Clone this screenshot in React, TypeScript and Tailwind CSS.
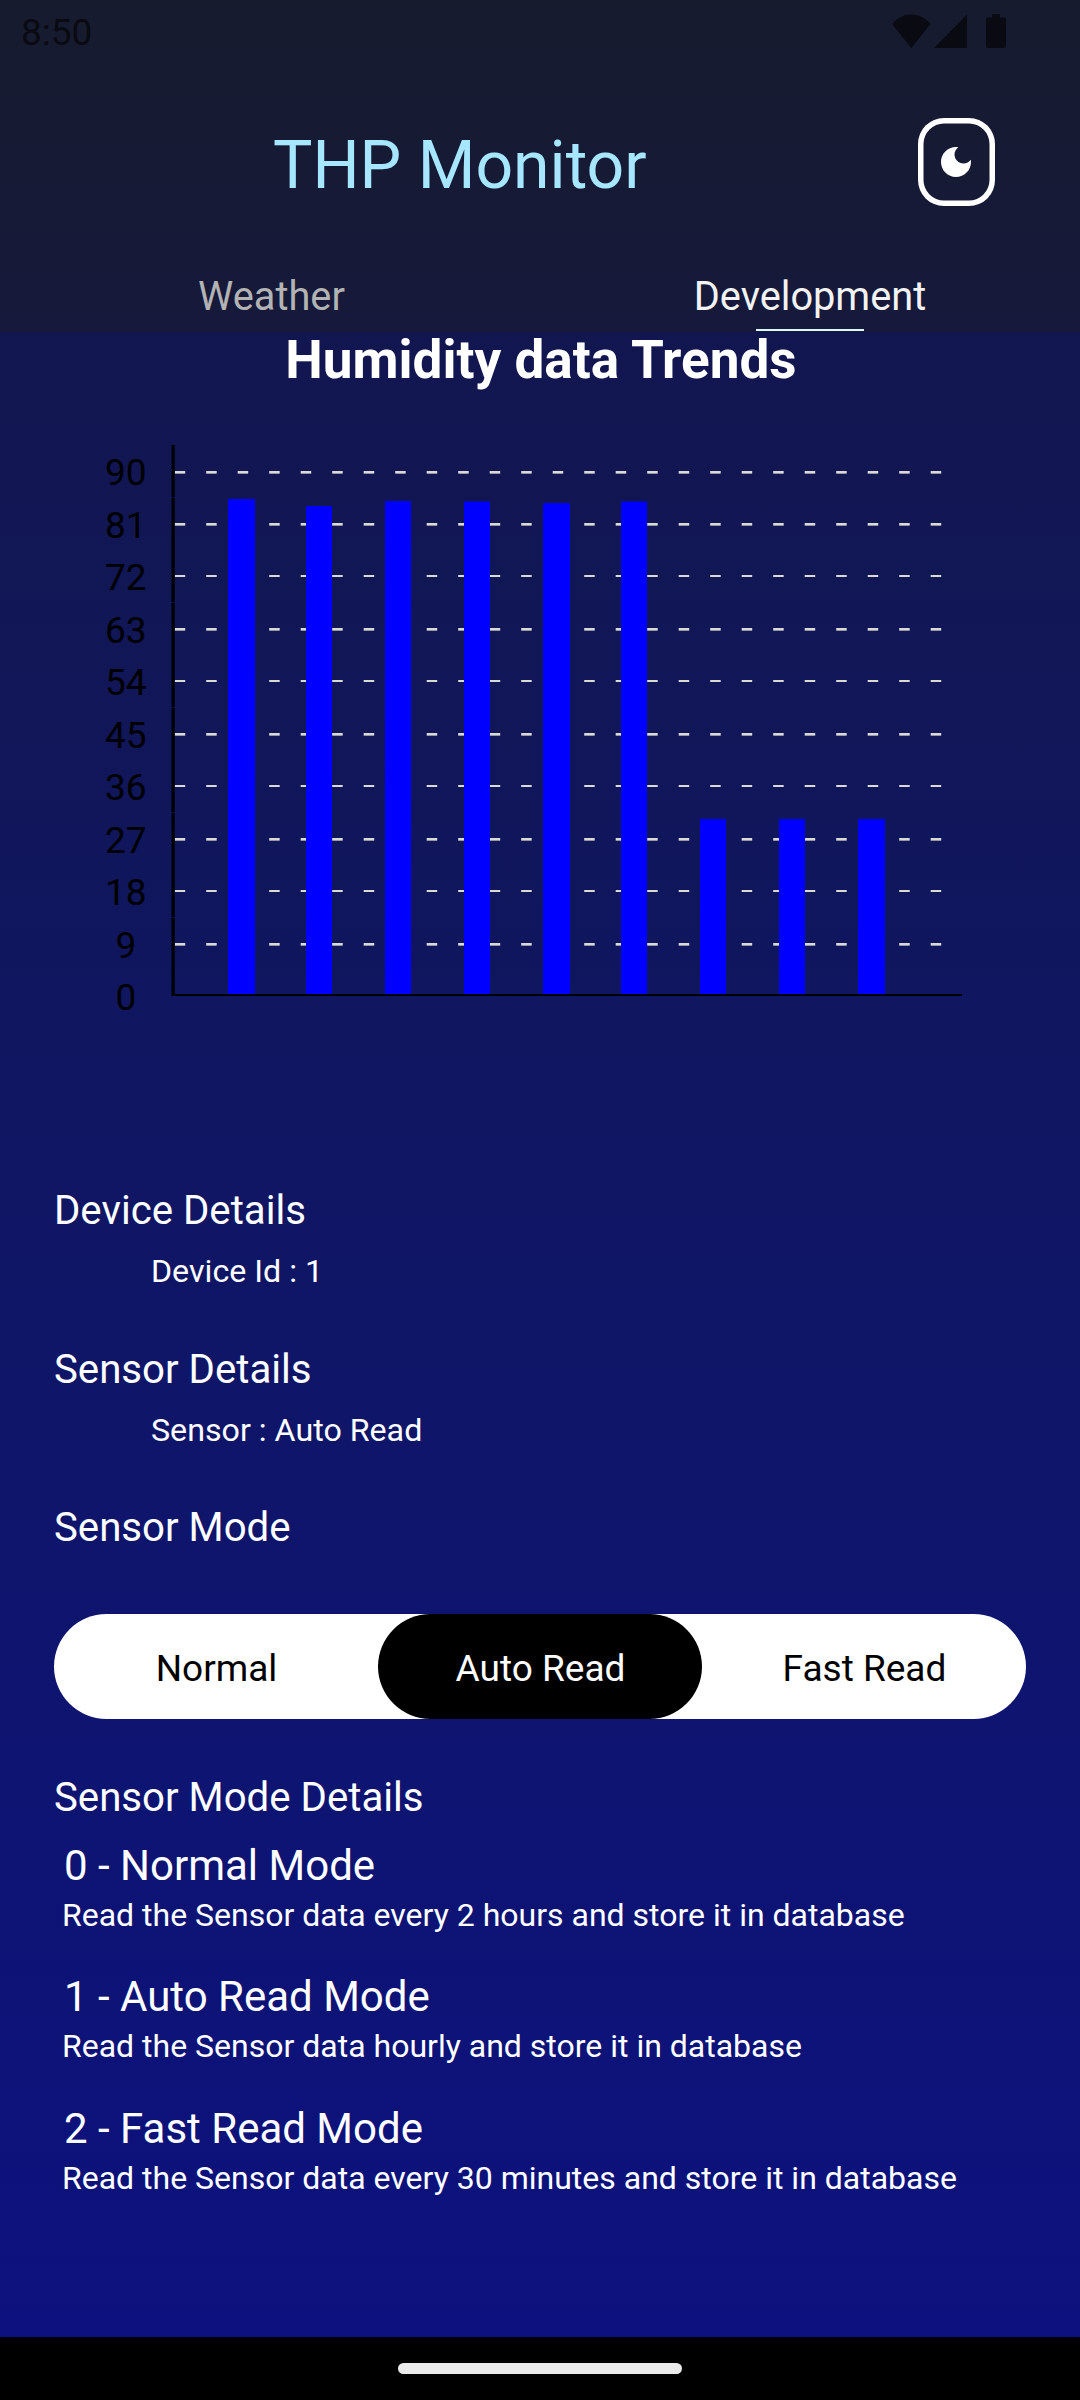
const BAR_TOPS = [499, 506, 501, 501.5, 503, 501.5, 819, 819, 819];
const BAR_X = [228, 306, 385, 464, 543, 621, 700, 779, 858];
const BAR_W = [27, 26, 26, 26, 27, 26, 26, 26, 27];
const TICKS = [90, 81, 72, 63, 54, 45, 36, 27, 18, 9, 0];
const GRID_Y = [471, 523, 575, 628, 680, 733, 785, 838, 890, 943];

const MODES = [
  { name: "0 - Normal Mode", text: "Read the Sensor data every 2 hours and store it in database" },
  { name: "1 - Auto Read Mode", text: "Read the Sensor data hourly and store it in database" },
  { name: "2 - Fast Read Mode", text: "Read the Sensor data every 30 minutes and store it in database" },
];

function StatusBar() {
  return (
    <div className="flex h-[63px] items-start justify-between pl-[21px] pr-[74px] text-[#090a12]">
      <span className="mt-[11px] text-[37px] leading-[44px]">8:50</span>
      <svg className="mt-[12px]" width="115" height="38" viewBox="0 0 115 38" fill="currentColor">
        <path d="M1 12C12-.7 29-.7 39.500 12L20.300 36Z" />
        <path d="M43 36L76 2.500V36Z" />
        <path d="M101 2h8v3.500h4a2 2 0 0 1 2 2V34a2 2 0 0 1-2 2H97a2 2 0 0 1-2-2V7.500a2 2 0 0 1 2-2h4Z" />
      </svg>
    </div>
  );
}

function Header() {
  return (
    <header className="h-[332px] bg-linear-to-b from-[#161b2e] to-[#16193b]">
      <StatusBar />
      <div className="flex h-[197px] items-start justify-between pl-[273px] pr-[85px]">
        <h1 className="mt-[64px] text-[66.100px] leading-[77px] text-[#a6e6ff]">THP Monitor</h1>
        <button className="mt-[55px] flex h-[88px] w-[77px] items-center justify-center rounded-[26px] shadow-[inset_0_0_0_5.500px_#fff]">
          <svg className="mr-px" width="40" height="40" viewBox="0 0 24 24" fill="#fff">
            <path d="M12 3c-4.970 0-9 4.030-9 9s4.030 9 9 9 9-4.030 9-9c0-.46-.04-.92-.1-1.360-.98 1.370-2.580 2.260-4.400 2.260-2.980 0-5.400-2.420-5.400-5.400 0-1.810.89-3.420 2.260-4.400-.44-.06-.9-.1-1.360-.1z" />
          </svg>
        </button>
      </div>
      <nav className="grid h-[72px] grid-cols-2 text-center text-[39.750px] leading-[46px]">
        <div className="pl-[3px] pt-[14px] text-[#b3b3b3]">Weather</div>
        <div className="flex flex-col items-center justify-between pb-px pt-[14px] text-[#f3f3f3]">
          <span>Development</span>
          <span className="h-[2px] w-[108px] bg-[#d9fbf4]" />
        </div>
      </nav>
    </header>
  );
}

function HumidityChart() {
  return (
    <svg className="block" width="1080" height="600" viewBox="0 430 1080 600">
      {GRID_Y.map((y, i) => (
        <g key={y}>
          <line x1="174.700" x2="962" y1={y + 1} y2={y + 1} stroke="#dadad4" strokeWidth="2" strokeDasharray="10.500 21" />
          {(i === 0 || i % 2 === 1) && (
            <line x1="174.700" x2="962" y1={y + 2.5} y2={y + 2.5} stroke="#dadad4" strokeOpacity="0.650" strokeWidth="1" strokeDasharray="10.500 21" />
          )}
        </g>
      ))}
      {BAR_TOPS.map((top, i) => (
        <rect key={i} x={BAR_X[i]} y={top} width={BAR_W[i]} height={994 - top} fill="#0000ff" />
      ))}
      <rect x="171.500" y="445" width="3.200" height="551" fill="#000" />
      {[497, 602, 707, 812, 917].map((y) => (
        <rect key={y} x="171" y={y} width="4" height="1" fill="#111655" fillOpacity="0.700" />
      ))}
      <rect x="174" y="994" width="788" height="2" fill="#000" />
      {TICKS.map((t, i) => (
        <text key={t} x="125.800" y={485.3 + i * 52.5} textAnchor="middle" fontSize="37" fill="#000">
          {t}
        </text>
      ))}
    </svg>
  );
}

function ModeSwitch() {
  return (
    <div className="grid h-[105px] grid-cols-3 rounded-full bg-white text-center text-[37px] leading-[43px] text-black">
      <div className="pl-px pt-[33px]">Normal</div>
      <div className="rounded-full bg-black pl-px pt-[33px] text-white">Auto Read</div>
      <div className="pl-px pt-[33px]">Fast Read</div>
    </div>
  );
}

export default function App() {
  return (
    <div className="flex h-[2400px] w-[1080px] flex-col overflow-hidden bg-black font-['Roboto',sans-serif]">
      <div className="h-[2337px] bg-linear-to-b from-[#131648] to-[#0c117f]">
        <Header />
        <h2 className="h-[98px] pl-[2px] pt-px text-center text-[53.100px] font-bold leading-[54px] text-white">Humidity data Trends</h2>
        <HumidityChart />
        <main className="px-[54px] pt-[157px] text-white">
          <h3 className="text-[40.200px] leading-[48px]">Device Details</h3>
          <p className="ml-[97px] mt-[17px] text-[32.200px] leading-[38px]">Device Id : 1</p>
          <h3 className="mt-[56px] text-[40.200px] leading-[48px]">Sensor Details</h3>
          <p className="ml-[97px] mt-[17px] text-[32.200px] leading-[38px]">Sensor : Auto Read</p>
          <h3 className="mb-[62px] mt-[55px] text-[40.200px] leading-[48px]">Sensor Mode</h3>
          <ModeSwitch />
          <h3 className="mt-[55px] text-[40.200px] leading-[48px]">Sensor Mode Details</h3>
          <div className="ml-[8px] mt-[19px] flex flex-col gap-[38.400px]">
            {MODES.map((m) => (
              <section key={m.name}>
                <h4 className="ml-[2px] text-[42px] leading-[50px]">{m.name}</h4>
                <p className="mt-[5px] text-[32px] leading-[38px]">{m.text}</p>
              </section>
            ))}
          </div>
        </main>
      </div>
      <footer className="flex h-[63px] justify-center pt-[26px]">
        <div className="h-[11px] w-[284px] rounded-full bg-[#ebebeb]" />
      </footer>
    </div>
  );
}
